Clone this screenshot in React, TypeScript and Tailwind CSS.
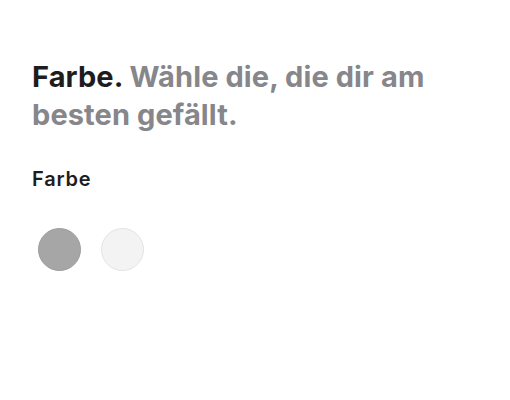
export default function App() {
  return (
    <div className="w-[510px] h-[400px] bg-white px-8 pt-[58px]" style={{ fontFamily: "Inter, 'Noto Sans', sans-serif" }}>
      <h2 className="text-[29px] leading-[38px] font-bold tracking-[0.1px] text-[#86868b] w-[450px]">
        <span className="text-[#1d1d1f]">Farbe.</span> Wähle die, die dir am besten gefällt.
      </h2>
      <div className="mt-[32px] text-[20px] leading-[26px] font-semibold tracking-[0.8px] text-[#1d1d1f]">Farbe</div>
      <div className="mt-[36px] ml-[6px] flex gap-[20px]">
        <div className="w-[43px] h-[43px] rounded-full bg-[#a6a6a6] border border-[#9c9c9c]" />
        <div className="w-[43px] h-[43px] rounded-full bg-[#f3f3f4] border border-[#e3e3e3]" />
      </div>
    </div>
  );
}
